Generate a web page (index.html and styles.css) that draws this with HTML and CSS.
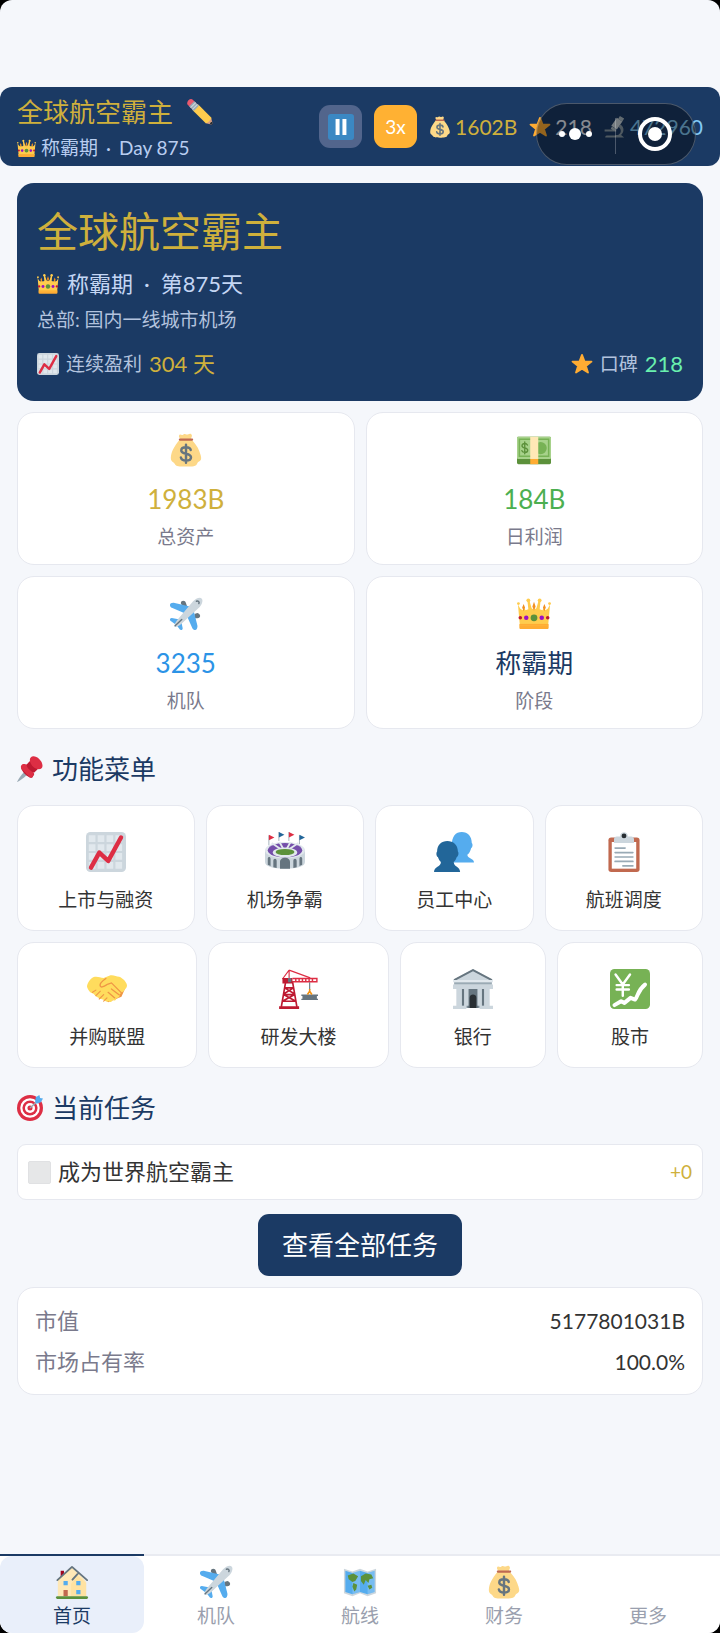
FILE: index.html
```
<!DOCTYPE html>
<html lang="zh-CN">
<head>
    <meta charset="UTF-8">
    <meta name="viewport" content="width=device-width, initial-scale=1">
    <title>全球航空霸主</title>
    <link rel="stylesheet" href="styles.css">
</head>
<body>
    <!-- icon sprites -->
    <svg class="sprites" aria-hidden="true">
        <symbol id="crown" viewBox="0 0 36 36">
            <path fill="#FFAC33" d="M2.500 29h31v3.500c0 .8-.6 1.500-1.500 1.500H4c-.9 0-1.500-.7-1.500-1.500z"/>
            <path fill="#FFCC4D" d="M3 30L1 8l2.500 4.500L6 14l1.500-3L9 14l3-1-1-9.500h2L15.500 12l1.700 1h1.600l1.700-1L23 3.500h2L24 13l3 1 1.500-3 1.500 3 2.500-1.500L35 8l-2 22z"/>
            <path fill="#FFAC33" d="M2.800 28.500h30.400v1.300H2.800z"/>
            <g fill="#FFCC4D"><circle cx="1.500" cy="7" r="1.500"/><circle cx="12" cy="3.500" r="2"/><circle cx="24" cy="3.500" r="2"/><circle cx="34.500" cy="7" r="1.500"/></g>
            <g fill="#F19020"><path d="M18 5l1.700 5L18 14.500 16.300 10zM7 7.500l1.500 3.500L7 15l-1.500-4zM29 7.500l1.500 3.500L29 15l-1.500-4z"/></g>
            <circle cx="3.500" cy="22" r="1.900" fill="#BE1931"/><circle cx="32.500" cy="22" r="1.900" fill="#BE1931"/>
            <circle cx="9.800" cy="22" r="2.400" fill="#9B0FC4"/><circle cx="26.200" cy="22" r="2.400" fill="#9B0FC4"/>
            <circle cx="18" cy="22" r="3.600" fill="#5C913B"/>
        </symbol>
        <symbol id="pencil" viewBox="0 0 36 36">
            <path fill="#D99E82" d="M35.200 33.600l-1.600-7.800c-3.500.6-7.200 4.300-7.700 7.800l7.800 1.600c1 .2 1.700-.6 1.500-1.600z"/>
            <path fill="#EA596E" d="M13.500 6.500L8 1C6.600-.3 4-.2 2 1.800S-.300 6.600 1 8l5.500 5.500z"/>
            <path fill="#FFCC4D" d="M33.800 25.900L15.600 7.700c-3-.5-8.200 4.700-7.800 7.800l18.200 18.200c2.800-.5 7.300-4.900 7.800-7.800z"/>
            <path fill="#99AAB5" d="M16.500 9.500L10 3 3 10l6.500 6.500z"/>
            <path stroke="#CCD6DD" stroke-width="1.500" d="M12 5l-7 7M14.500 7.500l-7 7"/>
            <path fill="#292F33" d="M35.400 34.200l-.7-2.700c-1.400.3-2.900 1.800-3.200 3.200l2.700.7c.8.200 1.400-.4 1.200-1.200z"/>
        </symbol>
        <symbol id="pause" viewBox="0 0 36 36">
            <rect width="36" height="36" rx="4" fill="#3B88C3"/>
            <path fill="#fff" d="M10.500 7H16v22h-5.500zM20 7h5.500v22H20z"/>
        </symbol>
        <symbol id="bag" viewBox="0 0 36 36">
            <path fill="#FDD888" d="M12 6c-1.500-1.500-2-3-1-4 .8-1 2.200.2 3.200 0C15.500 1.500 16 .8 17 1c1 .2 1.500 1 3 .6 1.300-.3 2-1.200 3.500-.4 1.500 1 .5 3-.3 4.800 3 4 7.300 8 9 13.500.6 2 2.300 5.500 1.800 8-.8 3-3.500 2.500-4 4.500-1 3.500-5 3.500-12 3.500S7.500 35.500 6 32.500c-.8-1.500-3.300-2-3.900-4.500-.5-2.500.4-6.500 1.400-9C5.500 14 9 10 12 6z"/>
            <path fill="#BF6952" d="M11.500 5.800h13c1.500 0 1.500 2.300 0 2.300h-13c-1.500 0-1.500-2.300 0-2.300z"/>
            <path fill="none" stroke="#67757F" stroke-width="2.600" stroke-linecap="round" d="M18 12.500v19M23 18c-.3-1.800-2-3-5-3s-5 1.400-5 3.400c0 4.600 10.300 2.400 10.300 7.200 0 2.200-2 3.600-5.300 3.600s-5-1.300-5.400-3.200"/>
        </symbol>
        <symbol id="star" viewBox="0 0 36 36">
            <path fill="#FFAC33" stroke="#FFAC33" stroke-width="3" stroke-linejoin="round" d="M18 3l4 10.800 11.500.3-9.100 7.200L27.800 32 18 25.800 8.200 32l3.400-10.700-9.100-7.200 11.500-.3z"/>
        </symbol>
        <symbol id="microscope" viewBox="0 0 36 36">
            <path fill="#8899A6" d="M19 31h9l5 4H2c0-1.500 1-3 2.500-3H19z"/>
            <path fill="#8899A6" d="M1 22h19v3.500H1zM27 14c7 5 6 13 0 18h-5c7-4 7-10 2-14z"/>
            <path fill="#CCD6DD" d="M21 3l9 6-9 13-9-6z"/>
            <path fill="#AAB8C2" d="M26 0l7 4-3 5-7-4zM13 17l6 4-2 4-6-4z"/>
        </symbol>
        <symbol id="chart" viewBox="0 0 36 36">
            <rect width="36" height="36" rx="4" fill="#CCD6DD"/>
            <g fill="#E1E8ED"><path d="M2.500 3h6v6h-6zM10.500 3h6v6h-6zM18.500 3h6v6h-6zM26.500 3h6v6h-6zM2.500 11h6v6h-6zM10.500 11h6v6h-6zM18.500 11h6v6h-6zM26.500 11h6v6h-6zM2.500 19h6v6h-6zM10.500 19h6v6h-6zM18.500 19h6v6h-6zM26.500 19h6v6h-6zM2.500 27h6v6h-6zM10.500 27h6v6h-6zM18.500 27h6v6h-6zM26.500 27h6v6h-6z"/></g>
            <path fill="none" stroke="#DD2E44" stroke-width="4" stroke-linecap="round" stroke-linejoin="round" d="M4.500 32L12 18.500l8 7.500L31.500 5"/>
        </symbol>
        <symbol id="cash" viewBox="0 0 36 36">
            <rect y="4" width="36" height="29" rx="1.500" fill="#5C913B"/>
            <rect y="4" width="36" height="23.500" rx="1" fill="#A7D28B"/>
            <path fill="none" stroke="#77B255" stroke-width="1.600" d="M2.500 6.500h31v18h-31z"/>
            <circle cx="25" cy="16" r="6.500" fill="#77B255"/>
            <path fill="none" stroke="#5C913B" stroke-width="1.500" stroke-linecap="round" d="M8.200 9.500v12.500M11 12.700c-.6-1.200-1.600-1.500-2.800-1.500-1.600 0-2.900.8-2.900 2.200 0 3.200 6 1.600 6 4.800 0 1.500-1.400 2.300-3 2.300-1.400 0-2.600-.5-3.100-1.800"/>
            <path fill="#FFE8B6" d="M14 4h8.500v23.500H14z"/>
            <path fill="#FFAC33" d="M14 27.500h8.500V33H14z"/>
        </symbol>
        <symbol id="plane" viewBox="0 0 36 36">
            <path fill="#66757F" d="M12.500 6.500c0-3.500 5-3.500 5.500 0l1 3h-5zM27 18l3-1c4 1 4 5.500 0 5.500h-3z"/>
            <path fill="#55ACEE" d="M22 10L5 6.200C3 6 1 7 1 8.500S2 11 3 11.500L16 17zM26 14l4 16c.5 2-.5 5-2 5s-3-1-3.500-2.500L19 20zM10 23.500l-7-1.300c-2 0-2.500 2-1.500 3L7 29zM13 26l1.500 7c0 2-2 2.500-3 1.500L7.500 29z"/>
            <path fill="#CCD6DD" d="M34.500 1.500c2 2 .5 6.500-2 9L13.500 28c-3 2.700-6.500 4.500-7.500 3.500s.5-4.500 3-7.500L25.500 4.500C28 2 32.500-.5 34.500 1.500z"/>
            <path fill="none" stroke="#66757F" stroke-width="1.500" stroke-linecap="round" d="M29 4.500c1.800-.8 3.600.8 2.600 2.500M6.500 30.500l7-6.800"/>
        </symbol>
        <symbol id="pin" viewBox="0 0 36 36">
            <path fill="#99AAB5" d="M0 36c.5-2 8-12.500 11.500-15.500l4 4C12.500 28 2 35.500 0 36z"/>
            <path fill="#BE1931" d="M10 11l14 14-3 5c-3 1-7-2-10-5s-6-7-5-10z"/>
            <path fill="#DD2E44" d="M7.500 11.500c3-1.500 7 0 11 4s6 9 4 12c-1.500 2.500-3 3-5 2L6 17.500c-1-2-1-4.500 1.500-6z"/>
            <path fill="#BE1931" d="M13 12l7-7 11 11-7 7c-4-1-10-6-11-11z"/>
            <path fill="#DD2E44" d="M19 2c2.500-2.500 7.500-2 12 2.500s5.500 10 3 12.500-8 1.500-12-2.500S16.500 4.500 19 2z"/>
        </symbol>
        <symbol id="stadium" viewBox="0 0 36 36">
            <path stroke="#99AAB5" stroke-width=".8" d="M3.500 3v9M12.500 0v8M21.500 0v8M31 3v8"/>
            <path fill="#DD2E44" d="M3.500 2.500L8.500 5l-5 2.500zM21.500 0L26.500 2.500l-5 2.500z"/>
            <path fill="#226699" d="M12.500 0L17.500 2.500l-5 2.500zM31 2.500L36 5l-5 2.500z"/>
            <path fill="#CCD6DD" d="M0 16h36v11c0 4-7 6-18 6S0 31 0 27z"/>
            <ellipse cx="18" cy="16.500" rx="18" ry="7.500" fill="#E1E8ED"/>
            <ellipse cx="18" cy="16.500" rx="15.500" ry="6.500" fill="#744EAA"/>
            <path stroke="#E1E8ED" stroke-width="1.600" d="M18 18L6 10M18 18l-5-9M18 18l5-9M18 18l12-8"/>
            <ellipse cx="18" cy="18.500" rx="11" ry="4.500" fill="#E1E8ED"/>
            <ellipse cx="18" cy="18" rx="8.500" ry="2.800" fill="#5C913B"/>
            <path fill="#66757F" d="M13.500 33v-6c0-5 9-5 9 0v6zM7.500 31.800V26c0-2.500 3-2.500 3 0v6.300zM25.500 32.300V26c0-2.500 3-2.500 3 0v5.800zM2.500 29.500V24c0-2 2.500-2 2.500 0v6.500zM31 30.500V24c0-2 2.500-2 2.500 0v5.500z"/>
        </symbol>
        <symbol id="people" viewBox="0 0 36 36">
            <path fill="#55ACEE" d="M16 12c0-8 3.500-12 9-12s9 4 9 10c1.200 1 .7 4-.5 4.500-.8 3-2 5-3.500 6 0 3.500 6 3 6 7H18z"/>
            <path fill="#226699" d="M2.800 17.500c0-6 4-9.500 9.200-9.500s9.500 3.500 9.500 9.500c1 1 .5 4.500-1 5-.7 2-1.500 3.500-2.700 4.500 0 4.500 5.700 4 5.700 9H0c0-5 6.200-4.500 6.200-9-1.200-1-2-2.500-2.700-4.500-1.500-.5-1.700-4-.7-5z"/>
        </symbol>
        <symbol id="clipboard" viewBox="0 0 36 36">
            <rect x="4" y="5" width="28" height="31" rx="2.500" fill="#C1694F"/>
            <path fill="#fff" d="M7 9h22v24H7z"/>
            <path fill="#CCD6DD" d="M9 10V6.500C9 5 10 4 11.500 4h3c0-5 7-5 7 0h3C26 4 27 5 27 6.500V10z"/>
            <circle cx="18" cy="3.500" r="2.200" fill="#292F33"/>
            <path stroke="#99AAB5" stroke-width="1.500" stroke-linecap="round" d="M10 14.500h9M10 18.500h16M10 22.500h16M10 26.500h16M17 30.500h9"/>
        </symbol>
        <symbol id="handshake" viewBox="0 0 36 36">
            <path fill="#EF9645" d="M2 13l7-5 12 2 8-2 6 8-4 9-12 5z"/>
            <path fill="#FFDC5D" d="M0 16c0-3 3-8 7-9 3-.5 5 1 8 1l5-2c4-1 6 1 9 1 3 1 7 5 7 8 0 2-2 3-3 5l-4 3c1 2-1 3.500-2.500 3 0 2-2 3-3.500 2 0 1.500-2 2.500-3.500 1-1.500 1-3.500 0-4-1l-3-1-4-2-3-3C3 22 1 19 0 16z"/>
            <path fill="none" stroke="#EF9645" stroke-width="1.200" stroke-linecap="round" d="M17 8.500c-3 2-6 5-5 7s5-1 7-2l3-1c3 3 6 6 9 9M19 21l6 5M22 18l6.500 5"/>
            <path fill="none" stroke="#EF9645" stroke-linecap="round" d="M5 21l3-2M8 24l4-4M11 27l4-4M15 29l3-3"/>
        </symbol>
        <symbol id="crane" viewBox="0 0 36 36">
            <path fill="none" stroke="#DD2E44" stroke-width="1" d="M10 1L4 9M10 1v8M10 1l19 7"/>
            <path fill="none" stroke="#BE1931" stroke-width="1.500" d="M7 11L3 34M13 11l4 23M6 17l9 5.500M14 17l-9 5.500M5 23l11 6M15 23L4 29M6 17h8M5 23h10M4 29h12"/>
            <path fill="#BE1931" d="M1 33.500h18V36H1zM4 8h9v5H4z"/>
            <path fill="none" stroke="#DD2E44" stroke-width="1.300" d="M13 8.500h22v3H13M16 8.500v3M19 8.500v3M22 8.500v3M25 8.500v3M28 8.500v3M31 8.500v3"/>
            <path fill="#66757F" d="M9 8h3v4H9zM21 23h15v1.200h-1v2.600h1V28H21v-1.200h1v-2.600h-1z"/>
            <path fill="none" stroke="#66757F" d="M28.500 12v7"/>
            <path fill="none" stroke="#F4900C" stroke-width="1.400" d="M28.500 18v2l-2 3M28.500 20l2 3"/>
        </symbol>
        <symbol id="bank" viewBox="0 0 36 36">
            <path fill="#9AAAB4" d="M4 17h28v18H4z"/>
            <path fill="#66757F" d="M13 18h10v17H13zM8 18h2v15H8zM26 18h2v15h-2z"/>
            <path fill="#292F33" d="M15 35V26c0-4 6-4 6 0v9z"/>
            <path fill="#CCD6DD" d="M3 18h5v15H3zM10 18h4v15h-4zM22 18h4v15h-4zM28 18h5v15h-5zM0 14h36v4H0zM0 33h12v3H0zM24 33h12v3H24z"/>
            <path fill="#CCD6DD" d="M18 0l18 10H0z"/>
            <path fill="none" stroke="#66757F" stroke-width="1.700" d="M1 10L18 1l17 9"/>
            <path fill="#E1E8ED" d="M0 10h36v2H0z"/><path fill="#9AAAB4" d="M1 12h34v2H1z"/>
        </symbol>
        <symbol id="stock" viewBox="0 0 36 36">
            <rect width="36" height="36" rx="4" fill="#77B255"/>
            <path fill="none" stroke="#fff" stroke-width="2.200" stroke-linecap="round" stroke-linejoin="round" d="M5 5l6.500 9L18 5M11.500 14v10M6 14.500h11M6 18.500h11"/>
            <path fill="none" stroke="#fff" stroke-width="3.600" stroke-linecap="round" stroke-linejoin="round" d="M4 32.500l6-3.500 3 1.500 5.500-4.500 4 1.500c3-3 2-8 9-13.500"/>
        </symbol>
        <symbol id="target" viewBox="0 0 36 36">
            <circle cx="18" cy="18" r="18" fill="#DD2E44"/><circle cx="18" cy="18" r="13.500" fill="#fff"/>
            <circle cx="18" cy="18" r="10.500" fill="#DD2E44"/><circle cx="18" cy="18" r="7" fill="#fff"/>
            <circle cx="18" cy="18" r="3.500" fill="#DD2E44"/>
            <path stroke="#99AAB5" stroke-width="2" d="M18 18L29 8"/>
            <path fill="#55ACEE" d="M25 9l1-6 5-3 1 4 4 1-3 5-6 2z"/>
        </symbol>
        <symbol id="house" viewBox="0 0 36 36">
            <path fill="#A0041E" d="M6 6h3.500v8H6z"/>
            <path fill="#FFE8B6" d="M3 15L18 3l11 10 4 5v15H3z"/>
            <path fill="#FFD983" d="M17 20l7-9 9 8v14H17z" opacity=".4"/>
            <path fill="none" stroke="#66757F" stroke-width="2" stroke-linecap="round" stroke-linejoin="round" d="M2.500 16L18 2l16 14M18.500 15.500L24 9.500"/>
            <path fill="#55ACEE" d="M9 17h4.500v4.500H9zM22.500 17H27v4.500h-4.500zM22.500 26.500H27V31h-4.500z"/>
            <path fill="#C1694F" d="M9 26.500h4.500V33H9z"/>
            <rect x="1" y="33" width="34" height="3" rx="1.500" fill="#5C913B"/>
        </symbol>
        <symbol id="map" viewBox="0 0 36 36">
            <path fill="#CCD6DD" d="M1 4l9 3 8-3 8 3 9-3v26l-9 3-8-3-8 3-9-3z"/>
            <path fill="#55ACEE" d="M2.500 6L10 8.500 18 6l8 2.500L33.500 6v22.500L26 31l-8-2.500L10 31l-7.500-2.500z"/>
            <path fill="#fff" d="M10 8.500L18 6v22.500L10 31zM26 8.500L33.500 6v22.500L26 31z" opacity=".2"/>
            <path fill="#5C913B" d="M5 11l6-2 5 3-3 5-3 1-4-3zM11 19l4 2-1 5-2 2-2-5zM19 12l5-3 6 1 2 4-4 1-1 4-3-3-2 5-3-4zM26 22l4-1 1 3-3 2z"/>
        </symbol>
    </svg>

    <div class="app">
        <header class="topbar">
            <div class="company">
                <h1 class="company-name">全球航空霸主 <svg class="icon icon-md"><use href="#pencil"/></svg></h1>
                <div class="company-stage"><svg class="icon icon-xs"><use href="#crown"/></svg>称霸期 <span class="dot">·</span> Day 875</div>
            </div>
            <div class="status">
                <button class="speed-btn" aria-label="暂停"><svg class="icon icon-md"><use href="#pause"/></svg></button>
                <button class="speed-btn speed-on">3x</button>
                <span class="resource gold"><svg class="icon icon-sm"><use href="#bag"/></svg>1602B</span>
                <span class="resource light"><svg class="icon icon-sm"><use href="#star"/></svg>218</span>
                <span class="resource sky"><svg class="icon icon-sm"><use href="#microscope"/></svg>472960</span>
            </div>
            <!-- mini program capsule, floats over the bar -->
            <div class="capsule">
                <svg viewBox="0 0 160 62" fill="#fff">
                    <circle cx="26" cy="31" r="3"/><circle cx="39" cy="31" r="6"/><circle cx="53" cy="31" r="3"/>
                    <path d="M79 15h1v36h-1z" opacity=".25"/>
                    <circle cx="119" cy="31" r="15" fill="none" stroke="#fff" stroke-width="4"/><circle cx="119" cy="31" r="7"/>
                </svg>
            </div>
        </header>

        <main class="content">
            <section class="hero">
                <h2 class="hero-name">全球航空霸主</h2>
                <p class="hero-stage"><svg class="icon icon-sm"><use href="#crown"/></svg>称霸期 <span class="dot">·</span> 第875天</p>
                <p class="hero-base">总部: 国内一线城市机场</p>
                <div class="hero-row">
                    <div class="hero-item"><svg class="icon icon-sm"><use href="#chart"/></svg>连续盈利 <span class="hero-value gold">304 天</span></div>
                    <div class="hero-item"><svg class="icon icon-sm"><use href="#star"/></svg>口碑 <span class="hero-value mint">218</span></div>
                </div>
            </section>

            <section class="stats">
                <div class="card stat">
                    <svg class="icon icon-lg"><use href="#bag"/></svg>
                    <div class="stat-value gold">1983B</div>
                    <div class="stat-label">总资产</div>
                </div>
                <div class="card stat">
                    <svg class="icon icon-lg"><use href="#cash"/></svg>
                    <div class="stat-value green">184B</div>
                    <div class="stat-label">日利润</div>
                </div>
                <div class="card stat">
                    <svg class="icon icon-lg"><use href="#plane"/></svg>
                    <div class="stat-value blue">3235</div>
                    <div class="stat-label">机队</div>
                </div>
                <div class="card stat">
                    <svg class="icon icon-lg"><use href="#crown"/></svg>
                    <div class="stat-value navy">称霸期</div>
                    <div class="stat-label">阶段</div>
                </div>
            </section>

            <h2 class="section-title"><svg class="icon icon-md"><use href="#pin"/></svg>功能菜单</h2>
            <div class="menu">
                <button class="card menu-item"><svg class="icon icon-xl"><use href="#chart"/></svg>上市与融资</button>
                <button class="card menu-item"><svg class="icon icon-xl"><use href="#stadium"/></svg>机场争霸</button>
                <button class="card menu-item"><svg class="icon icon-xl"><use href="#people"/></svg>员工中心</button>
                <button class="card menu-item"><svg class="icon icon-xl"><use href="#clipboard"/></svg>航班调度</button>
                <button class="card menu-item"><svg class="icon icon-xl"><use href="#handshake"/></svg>并购联盟</button>
                <button class="card menu-item"><svg class="icon icon-xl"><use href="#crane"/></svg>研发大楼</button>
                <button class="card menu-item"><svg class="icon icon-xl"><use href="#bank"/></svg>银行</button>
                <button class="card menu-item"><svg class="icon icon-xl"><use href="#stock"/></svg>股市</button>
            </div>

            <h2 class="section-title"><svg class="icon icon-md"><use href="#target"/></svg>当前任务</h2>
            <div class="card task">
                <input type="checkbox" class="task-check" id="task1">
                <label class="task-name" for="task1">成为世界航空霸主</label>
                <span class="task-reward gold">+0</span>
            </div>
            <button class="all-tasks">查看全部任务</button>

            <dl class="card market">
                <div class="market-row"><dt>市值</dt><dd>5177801031B</dd></div>
                <div class="market-row"><dt>市场占有率</dt><dd>100.0%</dd></div>
            </dl>
        </main>

        <nav class="tabs">
            <div class="tab active"><a href="#home"><svg class="icon icon-lg"><use href="#house"/></svg>首页</a></div>
            <div class="tab"><a href="#fleet"><svg class="icon icon-lg"><use href="#plane"/></svg>机队</a></div>
            <div class="tab"><a href="#routes"><svg class="icon icon-lg"><use href="#map"/></svg>航线</a></div>
            <div class="tab"><a href="#finance"><svg class="icon icon-lg"><use href="#bag"/></svg>财务</a></div>
            <div class="tab"><a href="#more"><svg class="icon icon-lg"></svg>更多</a></div>
        </nav>
    </div>
</body>
</html>
```
FILE: styles.css
```
* {
    box-sizing: border-box;
    margin: 0;
    padding: 0;
}

body {
    background-color: #000;
    font-family: Lato, "Noto Sans CJK SC", sans-serif;
    font-size: 19px;
    line-height: 26px;
    color: #333;
}

h1, h2 {
    font-weight: normal;
}

button {
    font-family: inherit;
    border: none;
    cursor: pointer;
}

.sprites {
    display: none;
}

.app {
    display: flex;
    flex-direction: column;
    min-height: 100vh;
    padding-top: 87px;
    background-color: #f5f7fb;
    border-radius: 12px;
    overflow: hidden;
}

/* Icons */
.icon {
    display: block;
    flex: none;
}

.icon-xs {
    width: 19px;
    height: 19px;
}

.icon-sm {
    width: 22px;
    height: 22px;
}

.icon-md {
    width: 26px;
    height: 26px;
}

.icon-lg {
    width: 34px;
    height: 34px;
}

.icon-xl {
    width: 42px;
    height: 42px;
    padding: 1px;
}

/* Colors */
.gold {
    color: #cfb03c;
}

.green {
    color: #4caf50;
}

.blue {
    color: #2b93e6;
}

.navy {
    color: #1b3a64;
}

.mint {
    color: #69f0ae;
}

.light {
    color: #e8eefa;
}

.sky {
    color: #81c9f5;
}

/* Top bar */
.topbar {
    position: relative;
    display: flex;
    justify-content: space-between;
    align-items: center;
    padding: 6px 17px;
    background-color: #1b3a64;
    border-radius: 12px;
}

.company-name {
    display: flex;
    align-items: center;
    gap: 14px;
    font-size: 26px;
    line-height: 38px;
    color: #cfb03c;
}

.company-stage {
    display: flex;
    align-items: center;
    gap: 5px;
    margin-top: 5px;
    line-height: 24px;
    color: #b8cdf0;
}

.dot {
    margin: 0 3px;
}

.status {
    display: flex;
    align-items: center;
    gap: 12px;
}

.speed-btn {
    display: flex;
    justify-content: center;
    align-items: center;
    width: 43px;
    height: 43px;
    border-radius: 11px;
    background-color: #52658c;
    color: #fff;
    font-size: 19px;
}

.speed-on {
    background-color: #ffb133;
}

.resource {
    display: flex;
    align-items: center;
    gap: 4px;
    font-size: 21px;
}

.capsule {
    position: absolute;
    top: 16px;
    right: 24px;
    width: 160px;
    height: 62px;
    border-radius: 31px;
    background-color: rgba(0, 0, 0, 0.42);
    box-shadow: inset 0 0 0 1px rgba(255, 255, 255, 0.25);
}

.capsule svg {
    display: block;
    width: 100%;
    height: 100%;
}

/* Content */
.content {
    flex: 1;
    display: flex;
    flex-direction: column;
    padding: 17px 17px 40px;
}

.card {
    background-color: #fff;
    border: 1px solid #e6e8ef;
    border-radius: 17px;
}

.hero {
    padding: 20px;
    border-radius: 17px;
    background-color: #1b3a64;
    color: #b3c3de;
}

.hero-name {
    font-size: 41px;
    line-height: 58px;
    color: #cfb03c;
}

.hero-stage {
    display: flex;
    align-items: center;
    gap: 8px;
    margin-top: 8px;
    font-size: 22px;
    line-height: 30px;
    color: #c4d6f4;
}

.hero-base {
    margin-top: 8px;
}

.hero-row {
    display: flex;
    justify-content: space-between;
    margin-top: 14px;
    line-height: 34px;
}

.hero-item {
    display: flex;
    align-items: center;
    gap: 7px;
}

.hero-value {
    font-size: 22px;
}

.stats {
    display: grid;
    grid-template-columns: 1fr 1fr;
    gap: 11px;
    margin-top: 11px;
}

.stat {
    display: flex;
    flex-direction: column;
    align-items: center;
    padding: 20px 10px 14px;
}

.stat-value {
    margin-top: 14px;
    font-size: 26px;
    line-height: 36px;
}

.stat-label {
    margin-top: 7px;
    color: #7a7a8c;
}

.section-title {
    display: flex;
    align-items: center;
    gap: 9px;
    margin: 20px 0 16px;
    font-size: 26px;
    line-height: 40px;
    color: #1b3a64;
}

.menu {
    display: flex;
    flex-wrap: wrap;
    gap: 11px;
}

.menu-item {
    flex: 1 1 auto;
    display: flex;
    flex-direction: column;
    align-items: center;
    gap: 14px;
    padding: 25px 28px 17px;
    border: 1px solid #e6e8ef;
    font-size: 19px;
    line-height: 26px;
    color: #333;
}

/* Tasks */
.task {
    display: flex;
    align-items: center;
    gap: 7px;
    padding: 12px 10px;
    border-radius: 9px;
}

.task-check {
    appearance: none;
    width: 23px;
    height: 23px;
    border: 1px solid #e0e1e3;
    border-radius: 2px;
    background-color: #e6e7e8;
}

.task-name {
    flex: 1;
    font-size: 22px;
    line-height: 30px;
}

.all-tasks {
    align-self: center;
    margin: 14px 0 11px;
    padding: 11px 24px;
    border-radius: 11px;
    background-color: #1b3a64;
    color: #fff;
    font-size: 26px;
    line-height: 40px;
}

.market {
    padding: 12px 17px;
}

.market-row {
    display: flex;
    justify-content: space-between;
    font-size: 22px;
    line-height: 41px;
}

.market-row dt {
    color: #7a7a8c;
}

.market-row dd {
    font-size: 21px;
}

/* Bottom tabs */
.tabs {
    display: flex;
    background-color: #fff;
}

.tab {
    flex: 1;
    border-top: 2px solid #e9ebf1;
}

.tab a {
    display: flex;
    flex-direction: column;
    align-items: center;
    gap: 4px;
    padding: 9px 0 4px;
    color: #9a9fae;
    text-decoration: none;
}

.tab.active {
    border-top-color: #1b3a64;
}

.tab.active a {
    background-color: #e9effa;
    border-radius: 12px;
    color: #1b3a64;
}
```
